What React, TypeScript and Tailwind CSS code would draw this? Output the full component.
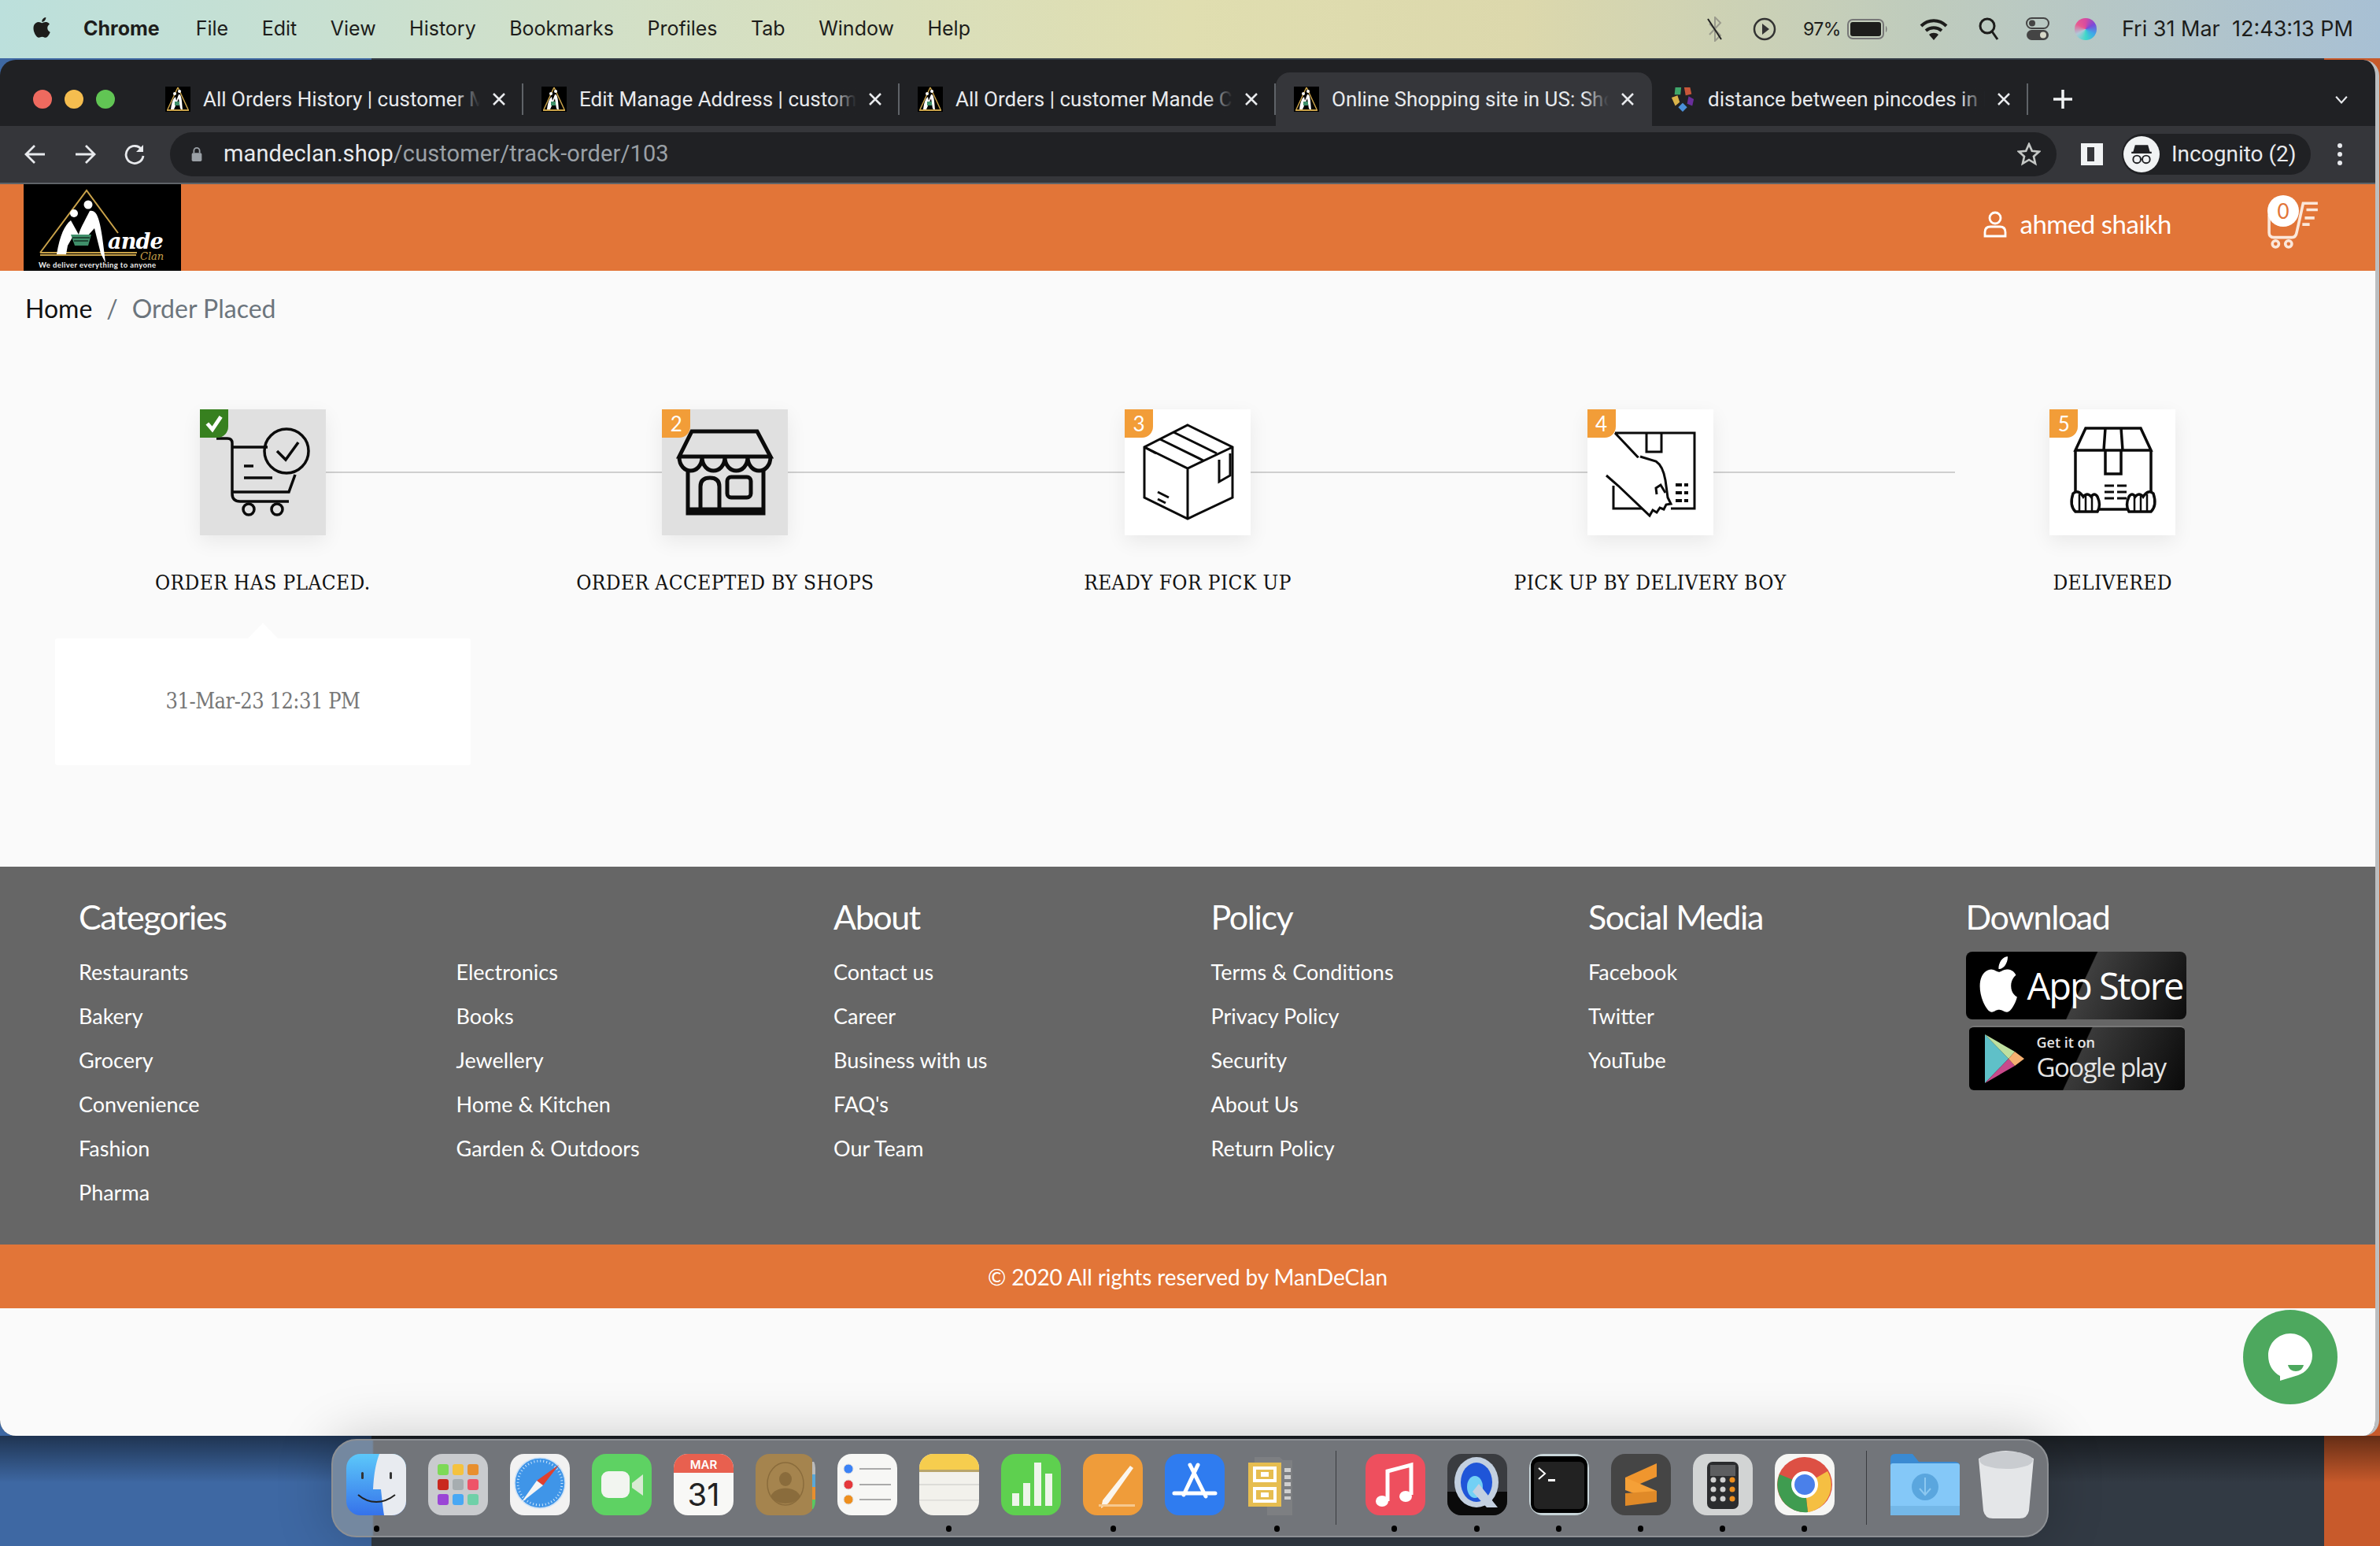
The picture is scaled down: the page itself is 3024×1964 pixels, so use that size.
import type { ReactNode } from "react";

const lato = "font-['Lato','Liberation_Sans',sans-serif]";
const ui = "font-['Inter','Liberation_Sans',sans-serif]";
const chromeFont = "font-['Roboto','Liberation_Sans',sans-serif]";
const slab = "font-['DejaVu_Serif_Condensed','DejaVu_Serif',serif]";

const menus = ["File", "Edit", "View", "History", "Bookmarks", "Profiles", "Tab", "Window", "Help"];

const APPLE =
  "M18.7 12.6c0-3 2.5-4.500 2.600-4.600-1.400-2.100-3.600-2.400-4.400-2.400-1.900-.2-3.600 1.100-4.600 1.100-.9 0-2.400-1.100-4-1.100-2 0-3.900 1.200-5 3-2.100 3.700-.5 9.200 1.500 12.200 1 1.500 2.200 3.100 3.800 3.100 1.500-.1 2.100-1 3.900-1 1.800 0 2.400 1 4 1 1.600 0 2.700-1.500 3.700-3 1.200-1.700 1.600-3.400 1.700-3.500-.1 0-3.200-1.200-3.200-4.800zM15.700 3.700c.8-1 1.400-2.400 1.200-3.700-1.200 0-2.600.8-3.500 1.800-.7.9-1.400 2.300-1.200 3.600 1.300.1 2.700-.7 3.500-1.700z";

function MiniLogo() {
  return (
    <svg viewBox="0 0 32 32" className="w-8 h-8 shrink-0">
      <rect width="32" height="32" fill="#000" />
      <path d="M16 1 L3 29 M16 1 L29 29" stroke="#c9a24a" strokeWidth="1.500" />
      <path d="M7 29 C8 20 10 15 13 13 L14 18 L17 10 C20 9 21 14 22 30 L19 28 L17 15 L14 22 L11 29Z" fill="#fff" />
      <circle cx="12" cy="9" r="2" fill="#fff" />
      <circle cx="18" cy="6" r="2" fill="#fff" />
      <rect x="12" y="19" width="6" height="5" fill="#3f8f6a" />
      <rect x="2" y="29" width="28" height="2" fill="#c9a24a" />
    </svg>
  );
}

function DistanceIcon() {
  return (
    <svg viewBox="0 0 32 34" className="w-8 h-8 shrink-0">
      <path d="M6 1h8l-1 10H5z" fill="#3fa66b" />
      <path d="M18 1h8l2 9-8 2z" fill="#c8563a" />
      <path d="M1 15l8-3 3 9-6 5z" fill="#d9b34a" />
      <path d="M24 13l7 4-2 9-7-3z" fill="#6a2f9c" />
      <path d="M16 22l6 6-6 6-6-6z" fill="#4a90d9" />
    </svg>
  );
}

function Tab({ title, active, icon }: { title: string; active?: boolean; icon?: ReactNode }) {
  return (
    <div
      className={`w-[478px] h-[68px] shrink-0 flex items-center pl-[23px] relative ${
        active ? "bg-[#35363a] rounded-t-[18px]" : ""
      }`}
    >
      {icon ?? <MiniLogo />}
      <div className="ml-4 w-[352px] overflow-hidden whitespace-nowrap text-[26px] text-[#e8eaed] relative">
        {title}
        <div className={`absolute right-0 top-0 bottom-0 w-8 bg-gradient-to-r from-transparent ${active ? "to-[#35363a]" : "to-[#202124]"}`} />
      </div>
      <svg viewBox="0 0 20 20" className="w-5 h-5 ml-[14px]" stroke="#e8eaed" strokeWidth="2.500">
        <path d="M3 3l14 14M17 3L3 17" />
      </svg>
      {!active && <div className="absolute right-[0px] top-[14px] h-10 w-[2px] bg-[#5f6368]" />}
    </div>
  );
}

function StatusIcons() {
  return (
    <div className="flex items-center text-[#1d1d1b]">
      <svg viewBox="0 0 24 32" className="w-[24px] h-[32px]" fill="none" strokeWidth="2">
        <path d="M5 9l14 15-7 7V1l7 7L5 23" stroke="#9a9a8c" />
        <path d="M3 3l17 26" stroke="#222" />
      </svg>
      <svg viewBox="0 0 30 30" className="w-[30px] h-[30px] ml-[36px]" fill="none" stroke="#333" strokeWidth="2.500">
        <circle cx="15" cy="15" r="13" />
        <path d="M12 8l9 7-9 7z" fill="#333" stroke="none" />
      </svg>
      <span className="text-[23px] ml-[34px] tracking-[-0.5px]">97%</span>
      <svg viewBox="0 0 52 26" className="w-[52px] h-[26px] ml-[8px]">
        <rect x="1" y="1" width="45" height="24" rx="6" fill="none" stroke="#777" strokeWidth="2" />
        <rect x="4" y="4" width="39" height="18" rx="3" fill="#1d1d1b" />
        <path d="M49 9c2 1 2 7 0 8z" fill="#777" />
      </svg>
      <svg viewBox="0 0 36 28" className="w-[36px] h-[28px] ml-[40px]" fill="none" stroke="#1d1d1b" strokeWidth="4">
        <path d="M2 10c9-9 23-9 32 0M8 16c6-5 14-5 20 0" />
        <path d="M18 28l-6-7c3-3 9-3 12 0z" fill="#1d1d1b" stroke="none" />
      </svg>
      <svg viewBox="0 0 26 30" className="w-[26px] h-[30px] ml-[39px]" fill="none" stroke="#1d1d1b" strokeWidth="3">
        <circle cx="11" cy="11" r="9" />
        <path d="M17 18l7 10" />
      </svg>
      <svg viewBox="0 0 30 30" className="w-[30px] h-[30px] ml-[34px]">
        <rect x="1" y="1" width="28" height="13" rx="6.500" fill="none" stroke="#444" strokeWidth="2" />
        <circle cx="8" cy="7.500" r="4" fill="#444" />
        <rect x="1" y="16" width="28" height="13" rx="6.500" fill="#444" />
        <circle cx="22" cy="22.500" r="4" fill="#d6d8c8" />
      </svg>
      <div className="w-[28px] h-[28px] ml-[32px] rounded-full bg-[conic-gradient(#d84aa0,#7c4ad8,#3fa8e8,#3fd8c8,#b0c8d8,#e85a90,#d84aa0)]" />
      <span className="text-[27px] ml-[32px] whitespace-nowrap">Fri 31 Mar&nbsp; 12:43:13 PM</span>
    </div>
  );
}

function Logo() {
  return (
    <svg viewBox="0 0 200 110" className="w-[200px] h-[110px] bg-black shrink-0">
      <path d="M21 87 L80 8 L120 62 M21 87 H144" stroke="#c9a24a" strokeWidth="2" fill="none" />
      <rect x="21" y="89" width="122" height="2" fill="#c9a24a" />
      <circle cx="64" cy="37" r="5" fill="#fff" />
      <circle cx="82" cy="26" r="5.500" fill="#fff" />
      <path d="M42 89 C46 65 52 52 60 46 L70 64 C72 56 76 50 84 34 C94 32 98 44 104 100 L98 88 L90 56 L72 76 L64 64 L56 78 L54 89Z" fill="#fff" />
      <path d="M60 64 H86 L82 78 H65Z" fill="#3f8f6a" />
      <path d="M62 68H84M64 72H82" stroke="#000" strokeWidth="1" />
      <text x="107" y="82" fill="#fff" fontFamily="'DejaVu Serif',serif" fontStyle="italic" fontWeight="700" fontSize="27" letterSpacing="-0.8">ande</text>
      <text x="148" y="96" fill="#c9a24a" fontFamily="'DejaVu Serif',serif" fontStyle="italic" fontSize="13">Clan</text>
      <text x="19" y="106" fill="#eee" fontFamily="'Lato',sans-serif" fontWeight="700" fontSize="9.500" letterSpacing="0.4">We deliver everything to anyone</text>
    </svg>
  );
}

const steps: { label: string; badge: string; done: boolean; icon: ReactNode }[] = [
  {
    label: "ORDER HAS PLACED.",
    badge: "✓",
    done: true,
    icon: (
      <g strokeWidth="3.500">
        <path d="M21 37h14q6 0 6 6v64q0 10 10 10h62M42 48h44M121 83l-8 22H42M56 72h12M56 87h36" />
        <circle cx="110" cy="53" r="28" />
        <path d="M98 53l11 11 16-22" />
        <circle cx="62" cy="127" r="7" />
        <circle cx="98" cy="127" r="7" />
      </g>
    ),
  },
  {
    label: "ORDER ACCEPTED BY SHOPS",
    badge: "2",
    done: true,
    icon: (
      <g strokeWidth="5">
        <path d="M38 28h83l17 32H22zM22 60c0 24 29 24 29 0c0 24 29 24 29 0c0 24 29 24 29 0c0 24 29 24 29 0" />
        <path d="M33 76v56h96V76M33 127h96M49 132V98q0-11 12-11t12 11v34" />
        <rect x="83" y="86" width="30" height="26" rx="5" />
      </g>
    ),
  },
  {
    label: "READY FOR PICK UP",
    badge: "3",
    done: false,
    icon: (
      <g strokeWidth="3">
        <path d="M80 20l57 28v64l-57 27-55-27V48zM25 48l55 27 57-27M80 75v64" />
        <path d="M45 38l55 27M62 29l55 27M25 48l15 8M120 64v28l14-8V56M42 105l14 7M42 114l10 5" />
      </g>
    ),
  },
  {
    label: "PICK UP BY DELIVERY BOY",
    badge: "4",
    done: false,
    icon: (
      <g strokeWidth="3">
        <path d="M70 126H33V97M35 30h101v96h-30M75 30v24h19V30M35 30l34 36-30 31" />
        <path d="M24 84l15 13 40 38 4-7 5 3 4-6 5 2 3-6 6-1-4-8-3-22q-3-18-12-24l-20-6" fill="#fff" />
        <path d="M88 108l-1-8 6-4 6 10" />
        <path d="M112 96h16M112 106h16M112 116h16" strokeWidth="4" strokeDasharray="8 3" />
      </g>
    ),
  },
  {
    label: "DELIVERED",
    badge: "5",
    done: false,
    icon: (
      <g strokeWidth="3.500">
        <path d="M46 24h70l13 28H33zM33 52v75h96V52M71 24l-2 28M91 24l2 28M71 52v30h20V52" />
        <path d="M70 97h30M70 105h30M70 113h30" strokeWidth="3" strokeDasharray="12 4" />
        <path d="M30 107q-5 15 3 23h28q5-8 0-19-4-6-8 0-5-6-10 0-7-10-13-4zM132 107q5 15-3 23H101q-5-8 0-19 4-6 8 0 5-6 10 0 7-10 13-4z" fill="#fff" />
        <path d="M38 108v22M46 108v22M54 110v20M108 110v20M116 108v22M124 108v22" strokeWidth="2.500" />
      </g>
    ),
  },
];

function Step({ step }: { step: (typeof steps)[number] }) {
  return (
    <div className="flex flex-col items-center">
      <div
        className={`relative w-[160px] h-[160px] shadow-[0_8px_24px_rgba(0,0,0,0.07)] ${
          step.done ? "bg-[#e0e0e0]" : "bg-white"
        }`}
      >
        <svg viewBox="0 0 160 160" className="w-[160px] h-[160px]" fill="none" stroke="#0b0b0b">
          {step.icon}
        </svg>
        <div
          className={`absolute left-0 top-0 w-[36px] h-[36px] rounded-br-[14px] flex items-center justify-center text-white text-[26px] ${lato} ${
            step.badge === "✓" ? "bg-[#37801f]" : "bg-[#f29d38]"
          }`}
        >
          {step.badge === "✓" ? (
            <svg viewBox="0 0 24 24" className="w-[26px] h-[26px]" fill="none" stroke="#fff" strokeWidth="4.500">
              <path d="M4 12l6 7 10-15" />
            </svg>
          ) : (
            step.badge
          )}
        </div>
      </div>
      <div className={`mt-[45px] text-[26px] tracking-[0.4px] leading-[30px] text-[#111] whitespace-nowrap ${slab}`}>{step.label}</div>
    </div>
  );
}

const footerCols: { title?: string; links: string[] }[] = [
  { title: "Categories", links: ["Restaurants", "Bakery", "Grocery", "Convenience", "Fashion", "Pharma"] },
  { links: ["Electronics", "Books", "Jewellery", "Home & Kitchen", "Garden & Outdoors"] },
  { title: "About", links: ["Contact us", "Career", "Business with us", "FAQ's", "Our Team"] },
  { title: "Policy", links: ["Terms & Conditions", "Privacy Policy", "Security", "About Us", "Return Policy"] },
  { title: "Social Media", links: ["Facebook", "Twitter", "YouTube"] },
];

function FooterCol({ title, links }: { title?: string; links: string[] }) {
  return (
    <div className="w-[479.500px] shrink-0">
      <div className="h-[52px] text-[43px] leading-[52px] tracking-[-1.400px] text-white">{title}</div>
      <div className="mt-[16px] flex flex-col">
        {links.map((l) => (
          <div key={l} className="h-[56px] leading-[56px] text-[27px] text-white whitespace-nowrap">
            {l}
          </div>
        ))}
      </div>
    </div>
  );
}

function Badges() {
  return (
    <div className="flex flex-col">
      <div className="w-[280px] h-[86px] rounded-[8px] flex items-center pl-[12px] bg-[linear-gradient(115deg,#000_0%,#000_52%,#3f3f3f_52.500%,#0d0d0d_100%)]">
        <svg viewBox="0 0 24 25" className="w-[58px] h-[74px] shrink-0" fill="#fff" preserveAspectRatio="none">
          <path d={APPLE} />
        </svg>
        <span className="ml-[8px] text-[47px] leading-none text-white font-['Open_Sans',sans-serif] tracking-[-2px] whitespace-nowrap">App Store</span>
      </div>
      <div className="w-[274px] h-[82px] mt-[8px] ml-[4px] rounded-[6px] flex items-center pl-[20px] border-t-2 border-[#777] bg-[linear-gradient(115deg,#000_0%,#000_50%,#3a3a3a_50.500%,#0a0a0a_100%)]">
        <svg viewBox="0 0 50 62" className="w-[50px] h-[62px] shrink-0">
          <path d="M0 0L30 31 0 62z" fill="#5fc0c8" />
          <path d="M0 0L38 22 30 31z" fill="#bfe0a0" />
          <path d="M0 62L38 40 30 31z" fill="#c84a8c" />
          <path d="M30 31l8-9 12 9-12 9z" fill="#f5b070" />
        </svg>
        <div className="ml-[16px] flex flex-col text-[#e4e4e4] font-['Open_Sans',sans-serif]">
          <span className="text-[18px] leading-[22px] font-semibold">Get it on</span>
          <span className="text-[33px] leading-[42px] tracking-[-1.500px] whitespace-nowrap">Google play</span>
        </div>
      </div>
    </div>
  );
}

const dockShell = "w-[76px] h-[78px] rounded-[18px] overflow-hidden shrink-0";

function DockIcon({ children, className = "" }: { children: ReactNode; className?: string }) {
  return (
    <svg viewBox="0 0 76 78" className={`${dockShell} ${className}`}>
      {children}
    </svg>
  );
}

function DockLeft() {
  const pads = ["#7ed957", "#f5c23e", "#e88f2e", "#c9281e", "#a6adb0", "#ee5468", "#9a46d6", "#48a8f4", "#6fd0a8"];
  return (
    <>
      <DockIcon>
        <defs>
          <linearGradient id="fb" x1="0" y1="0" x2="0" y2="1">
            <stop offset="0" stopColor="#5cc8fa" />
            <stop offset="1" stopColor="#3572ea" />
          </linearGradient>
        </defs>
        <rect width="76" height="78" fill="url(#fb)" />
        <path d="M42 0h34v78H48c-2-14-3-24-4-33H34c1-18 3-32 8-45z" fill="#e8ebf0" />
        <rect x="19" y="23" width="3" height="9" rx="1.500" fill="#333" />
        <rect x="55" y="23" width="3" height="9" rx="1.500" fill="#333" />
        <path d="M15 52c14 12 32 12 47 0" stroke="#222" strokeWidth="2" fill="none" />
      </DockIcon>
      <DockIcon>
        <rect width="76" height="78" fill="#c9cbce" />
        {pads.map((c, i) => (
          <rect key={c} x={12 + (i % 3) * 19} y={13 + Math.floor(i / 3) * 19} width="14" height="14" rx="3" fill={c} />
        ))}
      </DockIcon>
      <DockIcon>
        <rect width="76" height="78" fill="#f2f2f2" />
        <circle cx="38" cy="37" r="32" fill="#3f95e8" stroke="#cfe2f5" strokeWidth="1.500" />
        <circle cx="38" cy="37" r="28" fill="none" stroke="#cfe6fa" strokeWidth="3" strokeDasharray="1 3" />
        <path d="M62 14L34 34l8 6z" fill="#e0402e" />
        <path d="M14 62L34 34l8 6z" fill="#f5f5f5" />
      </DockIcon>
      <DockIcon>
        <rect width="76" height="78" fill="#5ed263" />
        <rect x="12" y="22" width="36" height="34" rx="9" fill="#f2f5f0" />
        <path d="M51 37l14-11v27L51 43z" fill="#d8ead4" />
      </DockIcon>
      <DockIcon>
        <rect width="76" height="78" fill="#f8f8f6" />
        <rect width="76" height="24" fill="#e8604f" />
        <text x="38" y="19" textAnchor="middle" fontFamily="Inter,sans-serif" fontWeight="600" fontSize="15" fill="#fff">MAR</text>
        <text x="38" y="66" textAnchor="middle" fontFamily="Inter,sans-serif" fontSize="40" fill="#222">31</text>
      </DockIcon>
      <DockIcon>
        <rect x="66" y="10" width="10" height="16" fill="#bbb" />
        <rect x="66" y="26" width="10" height="16" fill="#5aa8d8" />
        <rect x="66" y="42" width="10" height="16" fill="#e88f2e" />
        <rect x="66" y="58" width="10" height="12" fill="#5ac860" />
        <rect width="72" height="78" rx="8" fill="#a5844e" />
        <ellipse cx="38" cy="38" rx="23" ry="27" fill="none" stroke="#8a6c3c" strokeWidth="1.500" />
        <ellipse cx="38" cy="32" rx="8" ry="9" fill="#8a6c3c" />
        <path d="M19 54c6-14 32-14 38 0-8 12-30 12-38 0z" fill="#8a6c3c" />
      </DockIcon>
      <DockIcon>
        <rect width="76" height="78" fill="#f7f7f5" />
        {[
          ["#3b82f6", 19],
          ["#e5383b", 39],
          ["#ee8f1e", 58],
        ].map(([c, y]) => (
          <g key={String(c)}>
            <circle cx="14" cy={Number(y)} r="6" fill={String(c)} stroke="#ddd" strokeWidth="1" />
            <rect x="28" y={Number(y) - 1} width="40" height="2" fill="#aaa" />
          </g>
        ))}
      </DockIcon>
      <DockIcon>
        <rect width="76" height="78" fill="#f2f1ec" />
        <rect width="76" height="20" fill="#f6cd4e" />
        <rect y="20" width="76" height="3" fill="#b9a56a" />
        <rect y="38" width="76" height="2" fill="#dcdcd8" />
        <rect y="58" width="76" height="1.500" fill="#dcdcd8" />
      </DockIcon>
      <DockIcon>
        <rect width="76" height="78" fill="#5ed04f" />
        <rect x="14" y="50" width="9" height="16" fill="#eef5ea" />
        <rect x="28" y="37" width="9" height="29" fill="#eef5ea" />
        <rect x="42" y="11" width="9" height="55" fill="#eef5ea" />
        <rect x="56" y="25" width="9" height="41" fill="#eef5ea" />
      </DockIcon>
      <DockIcon>
        <rect width="76" height="78" fill="#ef9c3a" />
        <path d="M60 15l4 3-32 45-9 6 2-10z" fill="#fbf6ee" />
        <rect x="20" y="64" width="46" height="3" fill="#f6c88e" />
      </DockIcon>
      <DockIcon>
        <rect width="76" height="78" fill="#2f7cf0" />
        <path d="M42 14L24 52M32 14l20 40M12 50h52" stroke="#fff" strokeWidth="5" strokeLinecap="round" />
      </DockIcon>
      <DockIcon className="rounded-none">
        <path d="M10 4h32l4 4h12v70H26V66H10z" fill="#7d7f82" />
        <rect x="2" y="11" width="42" height="56" fill="#e6bd50" />
        <rect x="8" y="16" width="30" height="20" fill="#fff" />
        <rect x="12" y="20" width="22" height="12" fill="#e6bd50" />
        <rect x="18" y="23" width="10" height="6" fill="#fff" />
        <rect x="8" y="42" width="30" height="20" fill="#fff" />
        <rect x="12" y="46" width="22" height="12" fill="#e6bd50" />
        <rect x="18" y="49" width="10" height="6" fill="#fff" />
        <path d="M52 18v40" stroke="#cfcfcf" strokeWidth="8" strokeDasharray="5 4" />
      </DockIcon>
    </>
  );
}

function DockRight() {
  return (
    <>
      <DockIcon>
        <rect width="76" height="78" fill="#ee4f5e" />
        <path d="M28 60V22l30-8v38" stroke="#fff" strokeWidth="5" fill="none" />
        <ellipse cx="21" cy="60" rx="8" ry="7" fill="#fff" />
        <ellipse cx="51" cy="54" rx="8" ry="7" fill="#fff" />
      </DockIcon>
      <DockIcon>
        <rect width="76" height="78" fill="#3a3c40" />
        <rect y="48" width="76" height="30" fill="#0a0a0a" />
        <ellipse cx="37" cy="36" rx="28" ry="32" fill="#c3d0e0" />
        <ellipse cx="37" cy="36" rx="20" ry="25" fill="#1f55d8" />
        <ellipse cx="35" cy="42" rx="10" ry="14" fill="#72d0f5" />
        <path d="M40 38l24 30h-14L32 48z" fill="#c3d0e0" />
      </DockIcon>
      <DockIcon>
        <rect width="76" height="78" rx="14" fill="#c9d6da" />
        <rect x="2" y="3" width="72" height="72" rx="12" fill="#000" />
        <rect x="6" y="10" width="64" height="60" rx="6" fill="#222" />
        <path d="M12 18l8 7-8 7" stroke="#fff" strokeWidth="2" fill="none" />
        <rect x="24" y="32" width="9" height="3" fill="#fff" />
      </DockIcon>
      <DockIcon>
        <rect width="76" height="78" fill="#454545" />
        <path d="M58 12v17L18 46V30z" fill="#f0962e" />
        <path d="M18 30l40 17v14L18 46z" fill="#f5a037" />
        <path d="M58 47v14L18 66V50z" fill="#e08a28" />
      </DockIcon>
      <DockIcon>
        <rect width="76" height="78" fill="#d2d4d4" />
        <rect x="18" y="10" width="40" height="60" rx="7" fill="#2b2c2e" />
        <rect x="22" y="14" width="32" height="14" fill="#5d5e60" />
        {[31, 43, 55].map((y) => (
          <g key={y}>
            <circle cx="26" cy={y + 2} r="3.500" fill="#d0d0d0" />
            <circle cx="38" cy={y + 2} r="3.500" fill="#d0d0d0" />
            <circle cx="50" cy={y + 2} r="3.500" fill="#ee8f1e" />
          </g>
        ))}
      </DockIcon>
      <DockIcon>
        <rect width="76" height="78" fill="#f6f6f4" />
        <circle cx="38" cy="39" r="35" fill="#dd5044" />
        <path d="M38 39L67 22A35 35 0 0 1 42 74z" fill="#f5bf42" />
        <path d="M38 39L42 74A35 35 0 0 1 6 26z" fill="#3f9c50" />
        <circle cx="38" cy="39" r="17" fill="#fff" />
        <circle cx="38" cy="39" r="13" fill="#4a80ea" />
      </DockIcon>
    </>
  );
}

function DockEnd() {
  return (
    <>
      <svg viewBox="0 0 88 78" className="w-[88px] h-[78px] shrink-0">
        <path d="M0 6q0-6 6-6h22l8 10h46q6 0 6 6v10H0z" fill="#3a8ad2" />
        <rect y="12" width="88" height="66" rx="3" fill="#84c8f8" />
        <rect y="66" width="88" height="12" fill="#74b8e8" />
        <ellipse cx="44" cy="42" rx="17" ry="17" fill="#5aa6de" />
        <path d="M44 30v22M37 44l7 8 7-8" stroke="#8cc8f0" strokeWidth="2" fill="none" />
      </svg>
      <svg viewBox="0 0 70 86" className="w-[70px] h-[86px] shrink-0 -ml-[4px]">
        <path d="M0 10q35-20 70 0l-6 66q-2 10-12 10H18q-10 0-12-10z" fill="#e4e6e8" />
        <ellipse cx="35" cy="12" rx="34" ry="11" fill="#c9ccd0" />
      </svg>
    </>
  );
}

function Dock() {
  const dots = [478, 1205, 1414, 1622, 1771, 1876, 1980, 2084, 2188, 2292];
  return (
    <div className="absolute left-[421px] top-[1828px] w-[2182px] h-[125px] rounded-[32px] bg-[linear-gradient(90deg,#7488a0_0px,#7488a0_50px,#72757a_52px)] border-[2px] border-[#8d9094] shadow-[0_0_70px_rgba(0,0,0,0.22)] pt-[17px] pl-[17px]">
      <div className="flex items-center gap-[28px] h-[78px]">
        <DockLeft />
        <div className="w-[1px] h-[94px] mt-2 mx-[9px] bg-[#3a3c40] shrink-0" />
        <DockRight />
        <div className="w-[1px] h-[94px] mt-2 ml-[12px] mr-[2px] bg-[#3a3c40] shrink-0" />
        <DockEnd />
      </div>
      {dots.map((x) => (
        <div
          key={x}
          className="absolute bottom-[5px] w-[7px] h-[8px] rounded-full bg-black"
          style={{ left: x - 426 }}
        />
      ))}
    </div>
  );
}

export default function App() {
  return (
    <div className={`relative w-[3024px] h-[1964px] overflow-hidden bg-[linear-gradient(90deg,#3e68a3_0px,#3e68a3_472px,#323a44_472px,#323a44_2953px,#c85a2b_2953px)] ${ui}`}>
      <div className="absolute left-0 right-0 top-[1824px] h-[60px] bg-gradient-to-b from-black/50 to-transparent" />

      {/* menu bar */}
      <div className="h-[74px] flex items-center justify-between pl-[40px] pr-[34px] bg-[linear-gradient(90deg,#bce0dc_0%,#d2e0c8_25%,#e0deb0_50%,#dcd8ac_64%,#c0ccbc_80%,#a8c0d4_100%)] text-[#1d1d1b]">
        <div className="flex items-center">
          <svg viewBox="0 0 24 25" className="w-[26px] h-[31px] -mt-1" fill="#1d1d1b">
            <path d={APPLE} />
          </svg>
          <span className="ml-[40px] mr-[46px] text-[25px] font-bold">Chrome</span>
          <div className="flex gap-[42.500px] text-[25px]">
            {menus.map((m) => (
              <span key={m}>{m}</span>
            ))}
          </div>
        </div>
        <StatusIcons />
      </div>

      {/* browser window */}
      <div className="mt-[2px] w-[3023px] h-[1748px] rounded-t-[20px] rounded-b-[20px] border-r-[5px] border-[#bcbec0] overflow-hidden flex flex-col bg-[#202124]">
        <div className={`h-[84px] pt-[16px] flex items-start shrink-0 relative ${chromeFont}`}>
          <div className="w-[187px] h-[68px] flex items-center pl-[42px] gap-[16px]">
            <div className="w-6 h-6 rounded-full bg-[#ee6a5f]" />
            <div className="w-6 h-6 rounded-full bg-[#f5bd4f]" />
            <div className="w-6 h-6 rounded-full bg-[#61c554]" />
          </div>
          <Tab title="All Orders History | customer Mande Clan" />
          <Tab title="Edit Manage Address | customer Mande" />
          <Tab title="All Orders | customer Mande Clan" />
          <Tab title="Online Shopping site in US: Shop Online" active />
          <Tab title="distance between pincodes in India" icon={<DistanceIcon />} />
          <svg viewBox="0 0 26 26" className="w-[26px] h-[26px] ml-[31px] mt-[21px]" stroke="#f1f3f4" strokeWidth="3.500">
            <path d="M13 1v24M1 13h24" />
          </svg>
          <svg viewBox="0 0 20 14" className="w-[18px] h-[12px] ml-[332px] mt-[29px]" fill="none" stroke="#e8eaed" strokeWidth="2.500">
            <path d="M2 2l8 9 8-9" />
          </svg>
        </div>

        <div className={`h-[72px] bg-[#35363a] flex items-center shrink-0 ${chromeFont}`}>
          <div className="w-[216px] flex items-center pl-[31px] gap-[35px] text-[#e8eaed]">
            <svg viewBox="0 0 28 28" className="w-[28px] h-[28px]" fill="none" stroke="currentColor" strokeWidth="2.800">
              <path d="M26 14H3M13 3L2 14l11 11" />
            </svg>
            <svg viewBox="0 0 28 28" className="w-[28px] h-[28px]" fill="none" stroke="currentColor" strokeWidth="2.800">
              <path d="M2 14h23M15 3l11 11-11 11" />
            </svg>
            <svg viewBox="0 0 28 28" className="w-[28px] h-[28px]" fill="none" stroke="currentColor" strokeWidth="2.800">
              <path d="M23 8a11 11 0 1 0 2 8" />
              <path d="M25 2v9h-9" fill="currentColor" stroke="none" />
            </svg>
          </div>
          <div className="w-[2397px] h-[56px] rounded-full bg-[#202124] flex items-center pl-[26px] pr-[20px]">
            <svg viewBox="0 0 16 22" className="w-[16px] h-[20px]" fill="#9aa0a6">
              <path d="M3 9V6a5 5 0 0 1 10 0v3h-2V6a3 3 0 0 0-6 0v3z" />
              <rect x="1" y="9" width="14" height="12" rx="2" />
            </svg>
            <div className="ml-[26px] text-[29px] tracking-[0.1px] text-[#e8eaed] flex-1 whitespace-nowrap">
              mandeclan.shop<span className="text-[#9aa0a6]">/customer/track-order/103</span>
            </div>
            <svg viewBox="0 0 28 28" className="w-[30px] h-[30px]" fill="none" stroke="#c4c7c5" strokeWidth="2.500">
              <path d="M14 2l3.600 8 8.400.8-6.400 5.700 1.900 8.500-7.500-4.500-7.500 4.500 1.900-8.500L2 10.800l8.400-.8z" />
            </svg>
          </div>
          <div className="ml-[31px] w-[28px] h-[28px] border-[5px] border-l-[8px] border-r-[11px] border-[#f1f3f4]" />
          <div className="ml-[24px] w-[240px] h-[52px] rounded-full bg-[#202124] flex items-center pl-[2px] text-[#e8eaed]">
            <div className="w-[46px] h-[46px] rounded-full bg-[#f1f3f4] flex items-center justify-center">
              <svg viewBox="0 0 30 30" className="w-[32px] h-[32px]" fill="none" stroke="#202124" strokeWidth="1.800">
                <path d="M8 5h14l2 7H6z" fill="#202124" />
                <path d="M3 13h24" strokeWidth="2.200" />
                <circle cx="9.500" cy="21" r="4.500" />
                <circle cx="20.500" cy="21" r="4.500" />
                <path d="M14 21h2" />
              </svg>
            </div>
            <span className="ml-[15px] text-[28px] whitespace-nowrap">Incognito (2)</span>
          </div>
          <div className="ml-[34px] flex flex-col gap-[5px]">
            <div className="w-[6px] h-[6px] rounded-full bg-[#e8eaed]" />
            <div className="w-[6px] h-[6px] rounded-full bg-[#e8eaed]" />
            <div className="w-[6px] h-[6px] rounded-full bg-[#e8eaed]" />
          </div>
        </div>
        <div className="h-[2px] bg-[#5f6368] shrink-0" />

        {/* page */}
        <div className={`relative flex-1 bg-[#fafafa] flex flex-col ${lato}`}>
          <div className="h-[110px] bg-[#e27538] flex items-center pl-[30px] shrink-0 relative">
            <Logo />
            <div className="ml-auto -mt-[8px] flex items-center text-white text-[33px] tracking-[-0.5px]">
              <svg viewBox="0 0 30 34" className="w-[30px] h-[34px]" fill="none" stroke="#fff" strokeWidth="2.800">
                <circle cx="15" cy="9" r="7" />
                <path d="M2 32v-5q0-7 7-7h12q7 0 7 7v5z" />
              </svg>
              <span className="ml-[16px]">ahmed shaikh</span>
            </div>
            <div className="relative ml-[122px] mr-[71px] w-[66px] h-[68px] -mt-[14px]">
              <svg viewBox="0 0 64 66" className="w-[66px] h-[68px]" fill="none" stroke="#fbe7da" strokeWidth="3.500">
                <path d="M2 24v22q0 6 6 6h22q5 0 6-6l8-36h18M48 18h14M46 28h12M43 36h9" />
                <circle cx="10" cy="60" r="4" />
                <circle cx="26" cy="60" r="4" />
              </svg>
              <div className="absolute left-0 top-0 w-[40px] h-[40px] rounded-full bg-white text-[#e27538] text-[26px] flex items-center justify-center">0</div>
            </div>
          </div>

          <div className="h-[96px] pl-[32px] flex items-center text-[32px] shrink-0">
            <span className="text-[#111]">Home</span>
            <span className="mx-[18px] text-[#6c757d]">/</span>
            <span className="text-[#6c757d]">Order Placed</span>
          </div>

          <div className="relative h-[661px] pt-[80px] shrink-0">
            <div className="absolute left-[334px] top-[159px] w-[2150px] h-[2px] bg-[#cfcfcf]" />
            <div className="relative grid grid-cols-5 w-[2938px] ml-[40px]">
              {steps.map((s) => (
                <Step key={s.label} step={s} />
              ))}
            </div>
            <div className="relative ml-[70px] mt-[56px] w-[528px] h-[161px] bg-white rounded-[3px] flex items-center justify-center">
              <div className="absolute left-[245px] -top-[20px] w-0 h-0 border-l-[19px] border-r-[19px] border-b-[20px] border-l-transparent border-r-transparent border-b-white" />
              <span className={`text-[27px] text-[#777] tracking-[-0.5px] ${slab}`}>31-Mar-23 12:31 PM</span>
            </div>
          </div>

          <div className="h-[480px] bg-[#666] pl-[100px] pt-[38px] flex shrink-0">
            {footerCols.map((c, i) => (
              <FooterCol key={i} title={c.title} links={c.links} />
            ))}
            <div className="flex flex-col">
              <div className="h-[52px] text-[43px] leading-[52px] tracking-[-1.400px] text-white">Download</div>
              <div className="mt-[18px]">
                <Badges />
              </div>
            </div>
          </div>

          <div className="h-[81px] bg-[#e27538] text-white text-[28px] tracking-[-0.1px] flex items-center justify-center shrink-0">
            © 2020 All rights reserved by ManDeClan
          </div>

          <div className="absolute left-[2850px] top-[1430px] w-[120px] h-[120px] rounded-full bg-[#4da85e] flex items-center justify-center">
            <svg viewBox="0 0 60 64" className="w-[60px] h-[64px]">
              <path d="M30 2c15 0 28 12 28 28 0 13-9 22-18 25L17 62v-6C8 51 2 42 2 30 2 14 15 2 30 2z" fill="#fff" />
              <path d="M27 42h20c-1 5-5 8-10 8s-9-3-10-8z" fill="#4da85e" />
            </svg>
          </div>
        </div>
      </div>

      <Dock />
    </div>
  );
}
